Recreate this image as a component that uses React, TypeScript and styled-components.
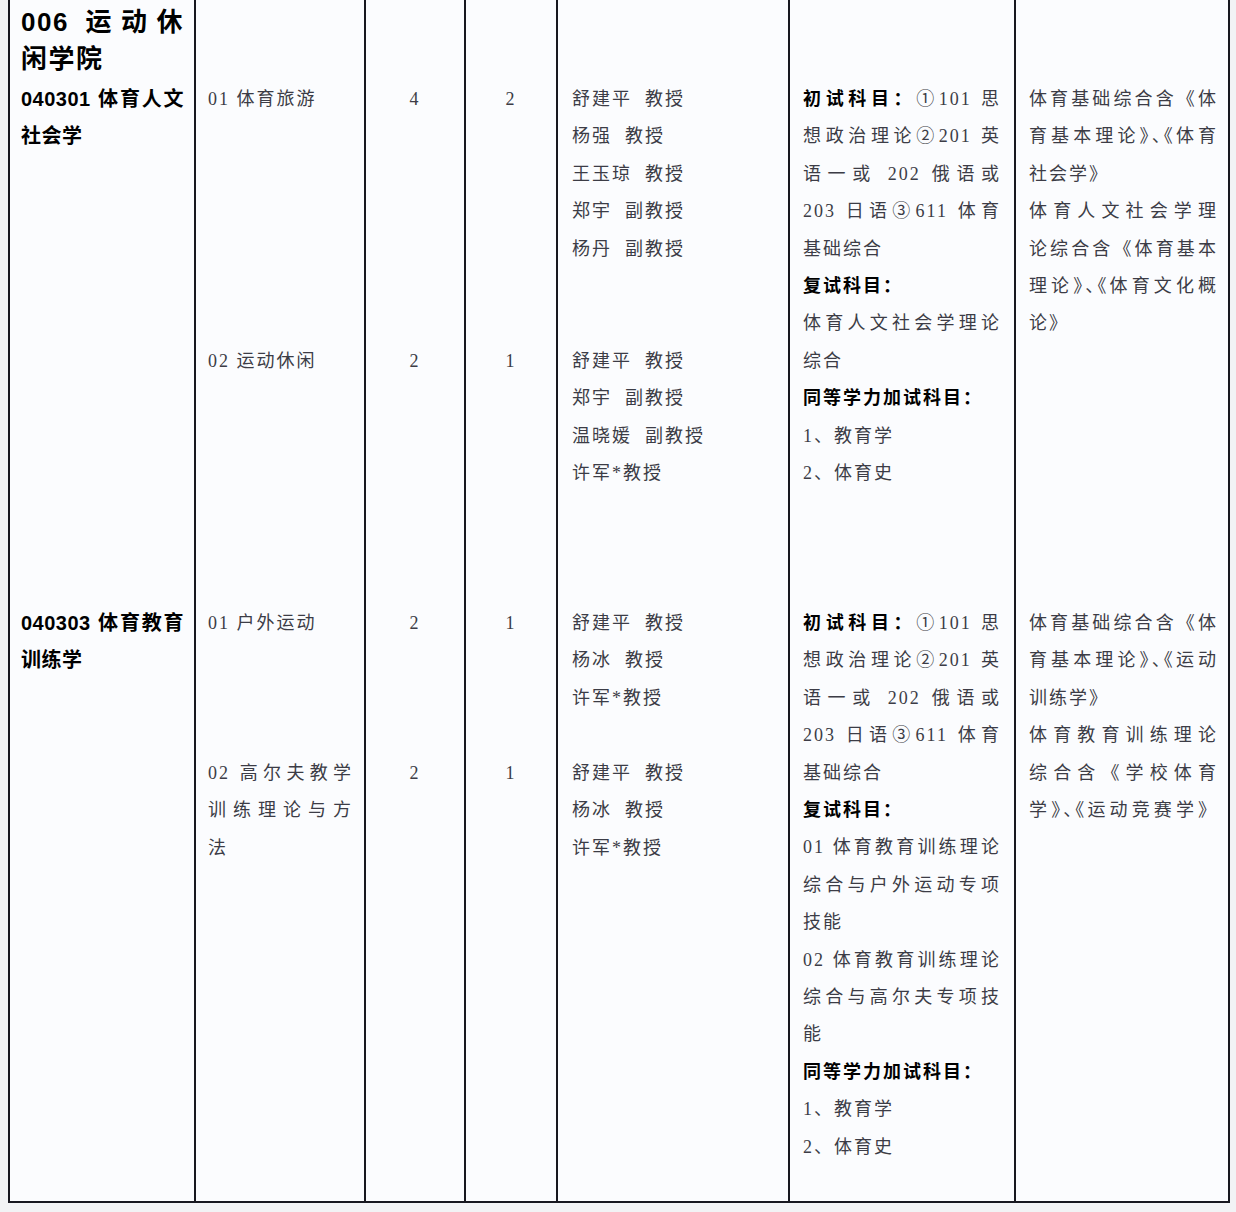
import React from 'react';
import styled, { createGlobalStyle } from 'styled-components';

type LineData = { text: string; j?: boolean; bold?: string };

const L = (text: string, j = false, bold?: string): LineData => ({ text, j, bold });

const GlobalStyle = createGlobalStyle`
  html, body {
    margin: 0;
    padding: 0;
    background: #f2f3f5;
  }
  body {
    padding: 0 6px 9px 8px;
    font-family: "Liberation Serif", "Noto Sans CJK SC", serif;
  }
`;

const Table = styled.div`
  display: grid;
  grid-template-columns: 184px 168px 98px 90px 230px 224px 212px;
  grid-template-rows: 79px 262px 262px 150px 448px;
  column-gap: 2px;
  width: max-content;
  background: #17171f;
  border: 2px solid #17171f;
  border-top: none;
`;

const Cell = styled.div<{ $span?: number; $pl?: number; $pr?: number; $pt?: number; $center?: boolean }>`
  grid-row: span ${(p) => p.$span ?? 1};
  background: #fbfcfe;
  padding: ${(p) => p.$pt ?? 2}px ${(p) => p.$pr ?? 10}px 0 ${(p) => p.$pl ?? 12}px;
  text-align: ${(p) => (p.$center ? 'center' : 'left')};
  font-size: 18px;
  line-height: 37.4px;
  letter-spacing: 2px;
  color: #3c3c46;
`;

const Line = styled.div<{ $justify?: boolean }>`
  white-space: ${(p) => (p.$justify ? 'nowrap' : 'pre')};
  text-align: ${(p) => (p.$justify ? 'justify' : 'left')};
  text-align-last: ${(p) => (p.$justify ? 'justify' : 'auto')};
`;

const Strong = styled.span`
  font-family: "Noto Sans CJK SC", sans-serif;
  font-weight: 700;
  line-height: 1;
  color: #000;
`;

const Squeeze = styled.span`
  font-feature-settings: "halt";
  letter-spacing: 1px;
`;

const Heading = styled.div<{ $size: number; $spacing: number }>`
  font-family: "Liberation Sans", "Noto Sans CJK SC", sans-serif;
  font-weight: 700;
  font-size: ${(p) => p.$size}px;
  letter-spacing: ${(p) => p.$spacing}px;
  color: #000;
`;

function renderText(text: string) {
  return text.split(/(》、《)/).map((s, i) => (s === '》、《' ? <Squeeze key={i}>{s}</Squeeze> : s));
}

function Lines({ lines }: { lines: LineData[] }) {
  return (
    <>
      {lines.map((l, i) => (
        <Line key={i} $justify={l.j}>
          {l.bold && <Strong>{l.bold}</Strong>}
          {renderText(l.text)}
        </Line>
      ))}
    </>
  );
}

const firstExam = [
  L('①101 思', true, '初试科目：'),
  L('想政治理论②201 英', true),
  L('语一或 202 俄语或', true),
  L('203 日语③611 体育', true),
  L('基础综合'),
  L('', false, '复试科目：'),
];

const extraExam = [L('', false, '同等学力加试科目：'), L('1、教育学'), L('2、体育史')];

const rows = [
  {
    code: [L('040301 体育人文', true), L('社会学')],
    exams: [...firstExam, L('体育人文社会学理论', true), L('综合'), ...extraExam],
    refs: [
      L('体育基础综合含《体', true),
      L('育基本理论》、《体育', true),
      L('社会学》'),
      L('体育人文社会学理', true),
      L('论综合含《体育基本', true),
      L('理论》、《体育文化概', true),
      L('论》'),
    ],
    subs: [
      {
        dir: [L('01 体育旅游')],
        plan: '4',
        recommend: '2',
        tutors: ['舒建平  教授', '杨强  教授', '王玉琼  教授', '郑宇  副教授', '杨丹  副教授'],
      },
      {
        dir: [L('02 运动休闲')],
        plan: '2',
        recommend: '1',
        tutors: ['舒建平  教授', '郑宇  副教授', '温晓媛  副教授', '许军*教授'],
      },
    ],
  },
  {
    code: [L('040303 体育教育', true), L('训练学')],
    exams: [
      ...firstExam,
      L('01 体育教育训练理论', true),
      L('综合与户外运动专项', true),
      L('技能'),
      L('02 体育教育训练理论', true),
      L('综合与高尔夫专项技', true),
      L('能'),
      ...extraExam,
    ],
    refs: [
      L('体育基础综合含《体', true),
      L('育基本理论》、《运动', true),
      L('训练学》'),
      L('体育教育训练理论', true),
      L('综合含《学校体育', true),
      L('学》、《运动竞赛学》', true),
    ],
    subs: [
      {
        dir: [L('01 户外运动')],
        plan: '2',
        recommend: '1',
        tutors: ['舒建平  教授', '杨冰  教授', '许军*教授'],
      },
      {
        dir: [L('02 高尔夫教学', true), L('训练理论与方', true), L('法')],
        plan: '2',
        recommend: '1',
        tutors: ['舒建平  教授', '杨冰  教授', '许军*教授'],
      },
    ],
  },
];

export default function App() {
  return (
    <>
      <GlobalStyle />
      <Table lang="zh-CN">
        <Cell $pl={11} $pr={10} $pt={4}>
          <Heading $size={26} $spacing={1.5}>
            <Lines lines={[L('006 运动休', true), L('闲学院')]} />
          </Heading>
        </Cell>
        <Cell />
        <Cell />
        <Cell />
        <Cell />
        <Cell />
        <Cell />

        {rows.map((row) =>
          row.subs.map((sub, si) => (
            <React.Fragment key={row.code[0].text + si}>
              {si === 0 && (
                <Cell $span={2} $pl={11} $pr={10}>
                  <Heading $size={20} $spacing={0.5}>
                    <Lines lines={row.code} />
                  </Heading>
                </Cell>
              )}
              <Cell $pl={12} $pr={11}>
                <Lines lines={sub.dir} />
              </Cell>
              <Cell $center $pl={0} $pr={0}>{sub.plan}</Cell>
              <Cell $center $pl={0} $pr={0}>{sub.recommend}</Cell>
              <Cell $pl={14}>
                <Lines lines={sub.tutors.map((t) => L(t))} />
              </Cell>
              {si === 0 && (
                <>
                  <Cell $span={2} $pl={13} $pr={13}>
                    <Lines lines={row.exams} />
                  </Cell>
                  <Cell $span={2} $pl={13} $pr={10}>
                    <Lines lines={row.refs} />
                  </Cell>
                </>
              )}
            </React.Fragment>
          ))
        )}
      </Table>
    </>
  );
}
